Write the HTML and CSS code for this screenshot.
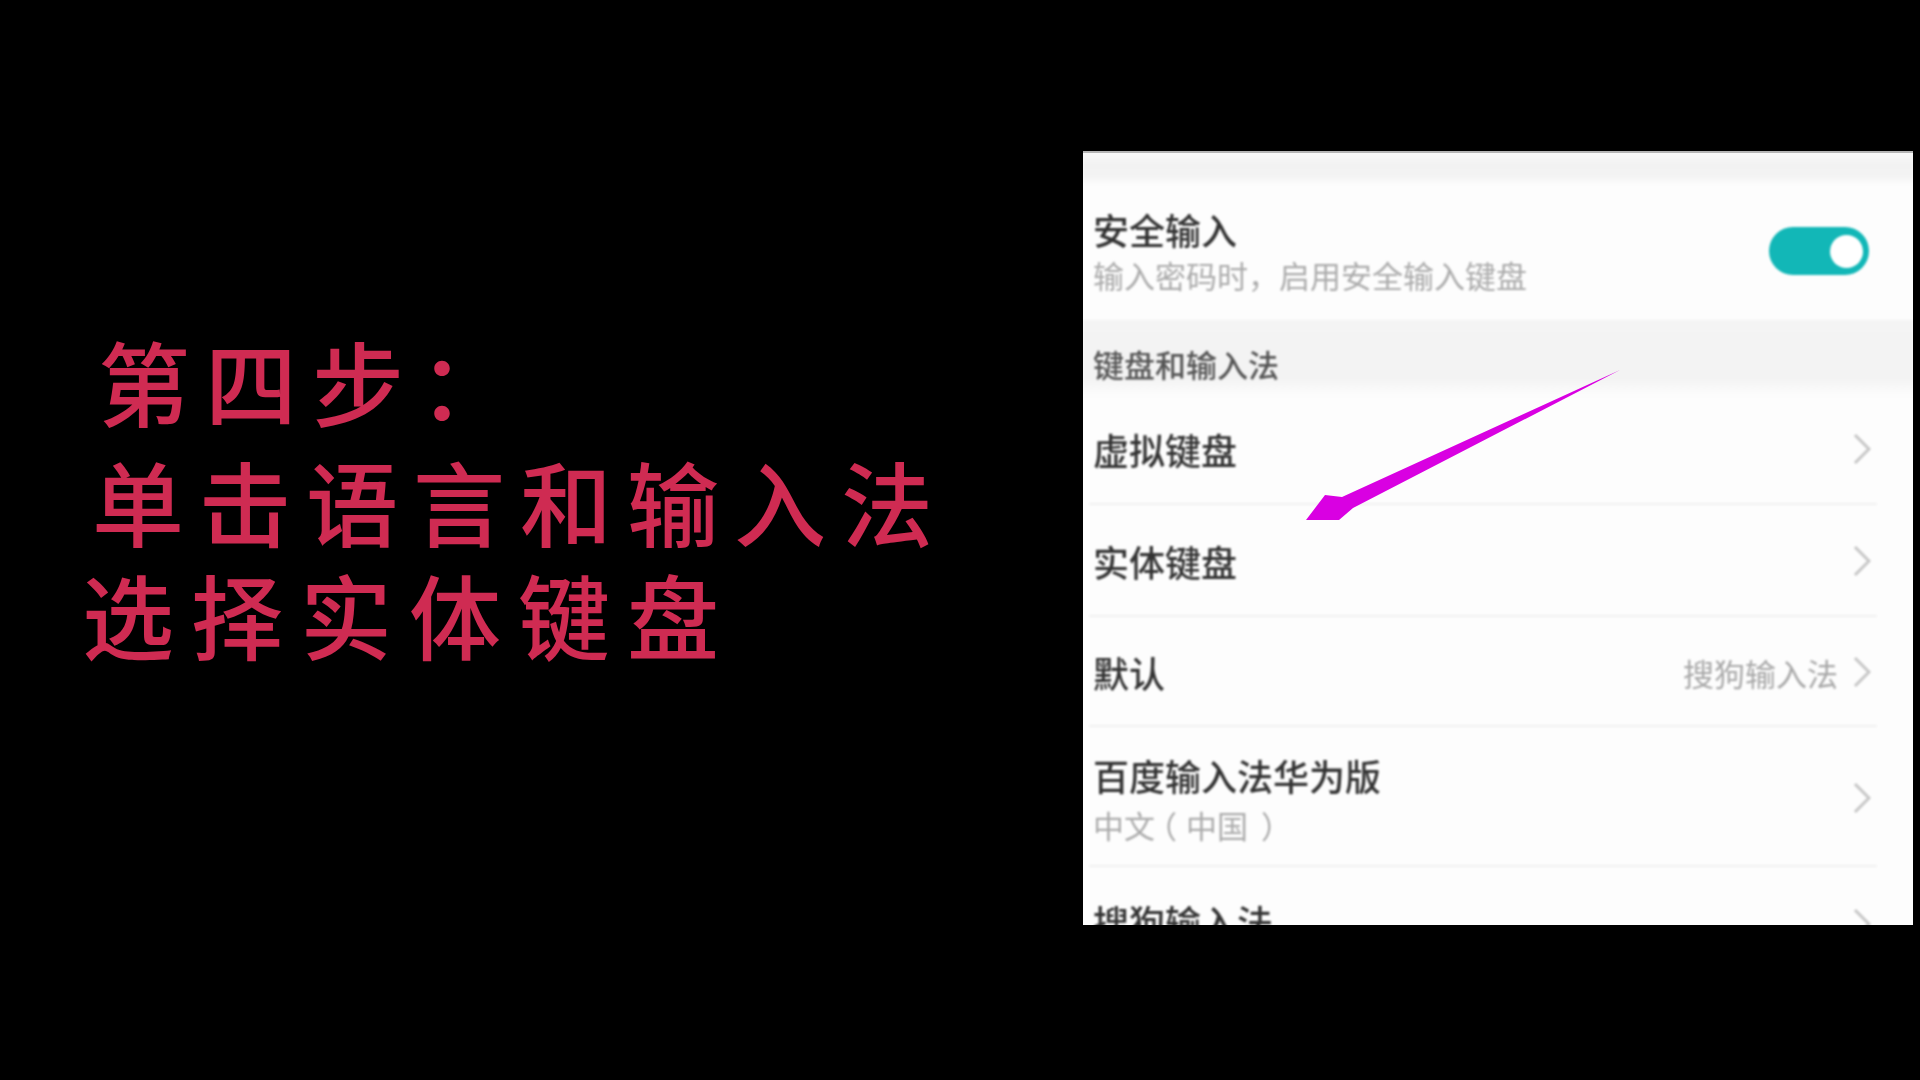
FILE: index.html
```html
<!DOCTYPE html>
<html lang="zh-CN">
<head>
<meta charset="utf-8">
<title>第四步</title>
<link rel="stylesheet" href="styles.css">
</head>
<body>
<main class="stage">
  <section class="caption">
    <p class="line line-1">第四步：</p>
    <p class="line line-2">单击语言和输入法</p>
    <p class="line line-3">选择实体键盘</p>
  </section>
  <section class="panel">
    <div class="sheet">
      <div class="top-band"></div>
      <div class="row row-secure">
        <div class="texts">
          <div class="title">安全输入</div>
          <div class="sub">输入密码时，启用安全输入键盘</div>
        </div>
        <div class="toggle"><span class="knob"></span></div>
      </div>
      <div class="section-head">键盘和输入法</div>
      <div class="row row-a">
        <div class="title">虚拟键盘</div>
        <svg class="chev" viewBox="0 0 18 32"><path d="M2 2 L16 16 L2 30"/></svg>
      </div>
      <div class="row row-b">
        <div class="title">实体键盘</div>
        <svg class="chev" viewBox="0 0 18 32"><path d="M2 2 L16 16 L2 30"/></svg>
      </div>
      <div class="row row-c">
        <div class="title">默认</div>
        <div class="value">搜狗输入法</div>
        <svg class="chev" viewBox="0 0 18 32"><path d="M2 2 L16 16 L2 30"/></svg>
      </div>
      <div class="row row-baidu">
        <div class="texts">
          <div class="title">百度输入法华为版</div>
          <div class="sub sub-baidu">中文<span class="paren paren-open">（</span>中国<span class="paren paren-close">）</span></div>
        </div>
        <svg class="chev" viewBox="0 0 18 32"><path d="M2 2 L16 16 L2 30"/></svg>
      </div>
      <div class="row row-last">
        <div class="title">搜狗输入法</div>
        <svg class="chev" viewBox="0 0 18 32"><path d="M2 2 L16 16 L2 30"/></svg>
      </div>
    </div>
    <svg class="arrow" viewBox="0 0 830 774">
      <path d="M537 219 L259 346 L242 344 L223 369 L256 369 L270 357 Z"/>
    </svg>
  </section>
</main>
</body>
</html>
```
FILE: styles.css
```css
* { box-sizing: border-box; }
html, body { margin: 0; height: 100%; background: #000; }
body { font-family: "Noto Sans CJK SC", "Noto Sans", sans-serif; overflow: hidden; }

.stage {
  display: flex;
  justify-content: space-between;
  align-items: flex-start;
  height: 1080px;
  background: #000;
}

/* Left caption */
.caption {
  padding-top: 322px;
  color: #cf2b52;
  font-size: 92px;
  font-weight: 500;
  letter-spacing: 15px;
}
.line { margin: 0; white-space: nowrap; line-height: 115px; }
.line-1 { margin-left: 98px; }
.line-2 { margin: 5px 0 0 92px; }
.line-3 { margin: -2px 0 0 82px; letter-spacing: 17px; }

/* Phone screenshot */
.panel {
  position: relative;
  width: 830px;
  height: 774px;
  margin: 151px 7px 0 0;
  overflow: hidden;
  background: #fdfdfd;
  border-top: 2px solid #b5b5b5;
}
.sheet { filter: blur(1.1px); color: #333; margin-top: -2px; }

.top-band {
  height: 34px;
  background: linear-gradient(#fbfbfb 0, #f2f2f2 40%, #f4f4f4 75%, #fdfdfd 100%);
}

.row {
  display: flex;
  align-items: center;
  padding: 0 42px 0 10px;
  position: relative;
}
.row::after {
  content: "";
  position: absolute;
  left: 6px;
  right: 36px;
  bottom: 0;
  height: 2px;
  background: #f1f1f1;
}
.row-secure { height: 135px; padding-right: 44px; align-items: flex-start; padding-top: 21px; }
.row-secure::after, .row-last::after { display: none; }
.row-a { height: 108px; padding-bottom: 4px; }
.row-b { height: 112px; }
.row-c { height: 110px; }
.row-baidu { height: 140px; align-items: flex-start; padding-top: 25px; }
.row-last { height: 100px; align-items: flex-start; }
.row-last .title { margin-top: 31px; }
.row-last .chev { margin-top: 41px; }

.texts { flex: 1; min-width: 0; }
.row-a .title, .row-b .title, .row-c .title, .row-last .title { flex: 1; }

.title {
  font-size: 36px;
  line-height: 46px;
  font-weight: 500;
  color: #333;
  white-space: nowrap;
}
.sub {
  font-size: 31px;
  line-height: 46px;
  color: #ababab;
  white-space: nowrap;
}
.sub-baidu { margin-top: 4px; }
.paren { display: inline-block; }
.paren-open { transform: translateX(-9px); }
.paren-close { transform: translateX(13px); }
.value {
  font-size: 31px;
  color: #a8a8a8;
  margin-right: 15px;
  white-space: nowrap;
}

.chev {
  flex: none;
  width: 18px;
  height: 32px;
  fill: none;
  stroke: #c6c6c6;
  stroke-width: 3px;
}
.row-baidu .chev { margin-top: 30px; }

.section-head {
  height: 77px;
  padding: 21px 0 0 10px;
  font-size: 31px;
  line-height: 46px;
  font-weight: 500;
  color: #555;
  background: linear-gradient(#f4f4f4 0, #f3f3f3 75%, #fdfdfd 100%);
}

.toggle {
  flex: none;
  width: 100px;
  height: 48px;
  margin-top: 21px;
  display: flex;
  align-items: center;
  justify-content: flex-end;
  padding-right: 6px;
  border-radius: 24px;
  background: #12b7b7;
}
.knob {
  width: 33px;
  height: 33px;
  border-radius: 50%;
  background: #fff;
}

.arrow {
  position: absolute;
  left: 0;
  top: -2px;
  width: 830px;
  height: 774px;
  fill: #d900e2;
  filter: blur(0.5px);
}
```
